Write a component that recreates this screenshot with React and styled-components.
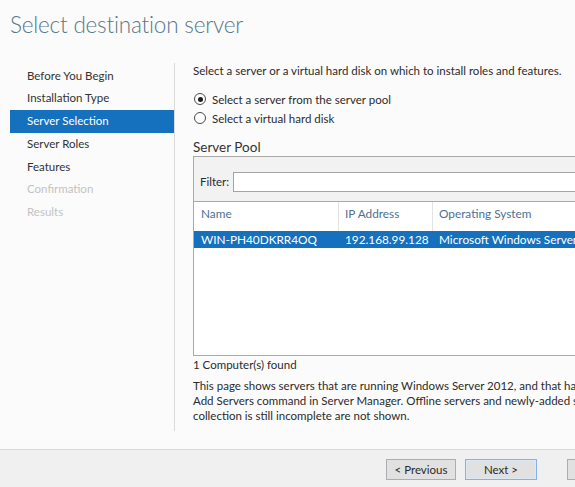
import React from 'react';
import styled, { createGlobalStyle } from 'styled-components';

const GlobalStyle = createGlobalStyle`
  html, body {
    margin: 0;
    padding: 0;
    overflow: hidden;
    background: #fbfbfb;
  }
  body {
    font-family: Lato, "Open Sans", "Liberation Sans", sans-serif;
  }
`;

const Window = styled.div`
  width: 740px;
  height: 487px;
  display: flex;
  flex-direction: column;
  background: #fbfbfb;
  color: #2b2b2b;
`;

const Header = styled.div`
  height: 60px;
  box-sizing: border-box;
  padding: 11px 0 0 10px;
  flex-shrink: 0;
`;

const Title = styled.h1`
  margin: 0;
  font-size: 22.5px;
  font-weight: 300;
  letter-spacing: -0.2px;
  color: #587787;
`;

const Body = styled.div`
  flex: 1;
  min-height: 0;
  display: flex;
  padding: 3px 0 18px 0;
`;

const Nav = styled.ul`
  list-style: none;
  margin: 0 0 0 10px;
  padding: 1.5px 0 0 0;
  width: 164px;
  border-right: 1px solid #dadada;
`;

const NavItem = styled.li`
  height: 22.75px;
  line-height: 22.75px;
  padding-left: 17px;
  font-size: 11.5px;
  background: ${(p) => (p.$active ? '#1570bd' : 'transparent')};
  color: ${(p) => (p.$active ? '#ffffff' : p.$disabled ? '#c3c3c3' : '#333333')};
`;

const Content = styled.div`
  flex: 1;
  min-width: 0;
  padding: 0 20px 0 18px;
  font-size: 11.5px;
`;

const Intro = styled.p`
  margin: 0;
  line-height: 16px;
`;

const RadioGroup = styled.div`
  margin-top: 10.5px;
`;

const RadioRow = styled.label`
  height: 19px;
  display: flex;
  align-items: center;
  gap: 6px;
  padding-left: 1px;
`;

const RadioCircle = styled.span`
  width: 10px;
  height: 10px;
  border-radius: 50%;
  border: 1px solid #4a4a4a;
  background: #ffffff;
  display: flex;
  align-items: center;
  justify-content: center;
  &::after {
    content: '';
    width: 5px;
    height: 5px;
    border-radius: 50%;
    background: ${(p) => (p.$checked ? '#1c1c1c' : 'transparent')};
  }
`;

const SectionTitle = styled.h2`
  margin: 10.5px 0 0 0;
  font-size: 13.5px;
  font-weight: 400;
  line-height: 18px;
  color: #333333;
`;

const PoolBox = styled.div`
  height: 200px;
  box-sizing: border-box;
  border: 1px solid #a9a9a9;
  background: #ffffff;
  display: flex;
  flex-direction: column;
`;

const FilterBar = styled.div`
  height: 45px;
  box-sizing: border-box;
  background: #f2f2f2;
  border-bottom: 1px solid #a9a9a9;
  display: flex;
  align-items: flex-end;
  padding: 0 6px 9px 6px;
  gap: 4px;
`;

const FilterLabel = styled.span`
  line-height: 20px;
  color: #2b2b2b;
`;

const FilterInput = styled.div`
  flex: 1;
  height: 20px;
  box-sizing: border-box;
  background: #ffffff;
  border: 1px solid #a5a5a5;
`;

const Grid = styled.div`
  display: grid;
  grid-template-columns: 144px 94px 1fr;
  font-size: 11.8px;
`;

const HeadCell = styled.div`
  height: 29px;
  box-sizing: border-box;
  padding: 4px 0 0 ${(p) => (p.$first ? '7px' : '6px')};
  line-height: 16px;
  color: #4b7191;
  border-left: ${(p) => (p.$first ? 'none' : '1px solid #e3e3e3')};
`;

const RowCell = styled.div`
  height: 17px;
  line-height: 17px;
  padding-left: 7px;
  background: #1570bd;
  color: #ffffff;
  white-space: nowrap;
  overflow: hidden;
`;

const Found = styled.div`
  margin-top: 1px;
  line-height: 16px;
`;

const Description = styled.p`
  margin: 5px 0 0 0;
  line-height: 15px;
  white-space: nowrap;
`;

const Line = styled.span`
  display: block;
`;

const Footer = styled.div`
  height: 38px;
  flex-shrink: 0;
  box-sizing: border-box;
  background: #f0f0f0;
  border-top: 1px solid #d9d9d9;
  display: flex;
  justify-content: flex-end;
  align-items: flex-start;
  padding: 9px 20px 0 0;
`;

const Button = styled.button`
  width: ${(p) => p.$width || 72}px;
  height: 21px;
  margin-left: ${(p) => p.$gap || 9}px;
  padding: 0;
  font-family: inherit;
  font-size: 11.5px;
  color: #2b2b2b;
  background: #e1e1e1;
  border: 1px solid ${(p) => (p.$focused ? '#7eb4ea' : '#adadad')};
  box-shadow: ${(p) => (p.$focused ? 'inset 0 0 0 1px #dbe9f7' : 'none')};
`;

const steps = [
  { label: 'Before You Begin' },
  { label: 'Installation Type' },
  { label: 'Server Selection', active: true },
  { label: 'Server Roles' },
  { label: 'Features' },
  { label: 'Confirmation', disabled: true },
  { label: 'Results', disabled: true },
];

export default function App() {
  return (
    <>
      <GlobalStyle />
      <Window>
        <Header>
          <Title>Select destination server</Title>
        </Header>
        <Body>
          <Nav>
            {steps.map((s) => (
              <NavItem key={s.label} $active={s.active} $disabled={s.disabled}>
                {s.label}
              </NavItem>
            ))}
          </Nav>
          <Content>
            <Intro>Select a server or a virtual hard disk on which to install roles and features.</Intro>
            <RadioGroup>
              <RadioRow>
                <RadioCircle $checked />
                Select a server from the server pool
              </RadioRow>
              <RadioRow>
                <RadioCircle />
                Select a virtual hard disk
              </RadioRow>
            </RadioGroup>
            <SectionTitle>Server Pool</SectionTitle>
            <PoolBox>
              <FilterBar>
                <FilterLabel>Filter:</FilterLabel>
                <FilterInput />
              </FilterBar>
              <Grid>
                <HeadCell $first>Name</HeadCell>
                <HeadCell>IP Address</HeadCell>
                <HeadCell>Operating System</HeadCell>
                <RowCell>WIN-PH40DKRR4OQ</RowCell>
                <RowCell>192.168.99.128</RowCell>
                <RowCell>Microsoft Windows Server 2012 Datacenter</RowCell>
              </Grid>
            </PoolBox>
            <Found>1 Computer(s) found</Found>
            <Description>
              <Line>This page shows servers that are running Windows Server 2012, and that have been added by using the</Line>
              <Line>Add Servers command in Server Manager. Offline servers and newly-added servers from which data</Line>
              <Line>collection is still incomplete are not shown.</Line>
            </Description>
          </Content>
        </Body>
        <Footer>
          <Button $width={70}>&lt; Previous</Button>
          <Button $width={72} $focused>Next &gt;</Button>
          <Button $width={72} $gap={30}>Install</Button>
          <Button $width={72}>Cancel</Button>
        </Footer>
      </Window>
    </>
  );
}
